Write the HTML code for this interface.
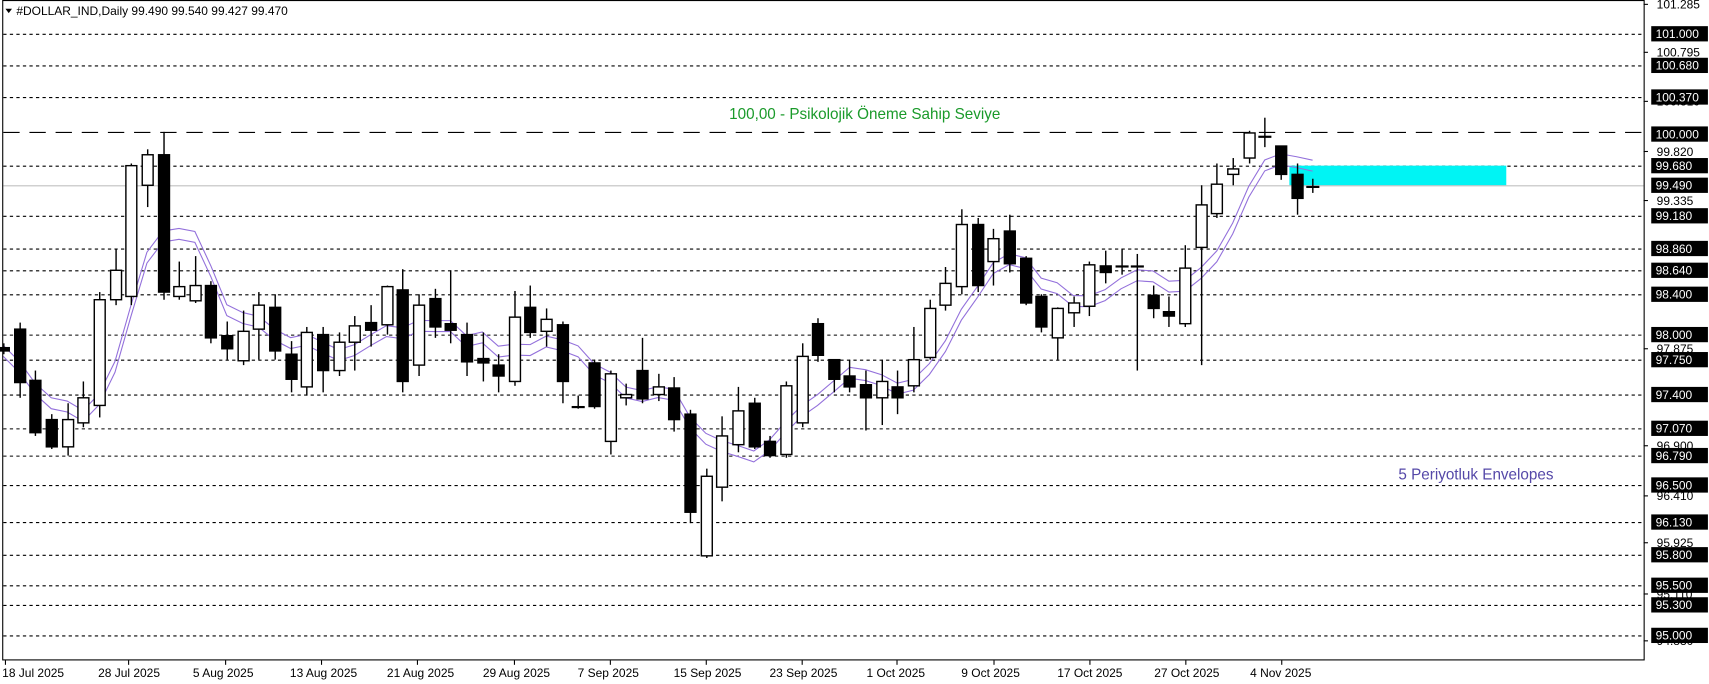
<!DOCTYPE html>
<html><head><meta charset="utf-8"><style>
html,body{margin:0;padding:0;background:#fff;width:1709px;height:684px;overflow:hidden}
svg{display:block}
text{font-family:"Liberation Sans","DejaVu Sans",sans-serif;font-size:11px}
</style></head><body>
<svg id="s" width="1709" height="684" viewBox="0 0 1568 627.6" preserveAspectRatio="none" xmlns="http://www.w3.org/2000/svg">
<rect x="0" y="0" width="1568" height="628" fill="#fff"/>
<g id="grid"></g>
<rect x="1183" y="152" width="199" height="18" fill="#00f4f4"/>
<line x1="3" y1="170.5" x2="1508" y2="170.5" stroke="#c0c0c0" stroke-width="1"/>
<line x1="3" y1="121.5" x2="1508" y2="121.5" stroke="#000" stroke-width="1" stroke-dasharray="15,9"/>
<g id="env"></g>
<g id="cand"></g>
<rect x="2.5" y="0.5" width="1506" height="605" fill="none" stroke="#000"/>
<text x="669" y="109" fill="#1a9a2a" style="font-size:14px">100,00 -  Psikolojik Öneme Sahip Seviye</text>
<text x="1283" y="440" fill="#5548a8" style="font-size:14px">5 Periyotluk Envelopes</text>
<path d="M5 8 L11 8 L8 12 Z" fill="#000"/>
<text x="15" y="14">#DOLLAR_IND,Daily  99.490 99.540 99.427 99.470</text>
<g id="dates" style="font-size:11px">
<text x="2" y="621">18 Jul 2025</text>
<text x="90" y="621">28 Jul 2025</text>
<text x="177" y="621">5 Aug 2025</text>
<text x="266" y="621">13 Aug 2025</text>
<text x="355" y="621">21 Aug 2025</text>
<text x="443" y="621">29 Aug 2025</text>
<text x="530" y="621">7 Sep 2025</text>
<text x="618" y="621">15 Sep 2025</text>
<text x="706" y="621">23 Sep 2025</text>
<text x="795" y="621">1 Oct 2025</text>
<text x="882" y="621">9 Oct 2025</text>
<text x="970" y="621">17 Oct 2025</text>
<text x="1059" y="621">27 Oct 2025</text>
<text x="1147" y="621">4 Nov 2025</text>
</g>
<g id="ax" style="font-size:11px">
<text x="1520" y="8" >101.285</text>
<text x="1520" y="52">100.795</text>
<text x="1520" y="97">100.310</text>
<text x="1520" y="143">99.820</text>
<text x="1520" y="188">99.335</text>
<text x="1520" y="324">97.875</text>
<text x="1520" y="413">96.900</text>
<text x="1520" y="459">96.410</text>
<text x="1520" y="502">95.925</text>
<text x="1520" y="549">95.110</text>
<text x="1520" y="592">94.830</text>
</g>
<g id="lab"></g>
</svg>
<script>
var NS="http://www.w3.org/2000/svg";
function el(p,t,a,txt){var e=document.createElementNS(NS,t);for(var k in a)e.setAttribute(k,a[k]);if(txt)e.textContent=txt;document.getElementById(p).appendChild(e);return e;}
function Y(p){return 31+(101-p)*92;}
var lv=["101.000","100.680","100.370","99.680","99.180","98.860","98.640","98.400","98.000","97.750","97.400","97.070","96.790","96.500","96.130","95.800","95.500","95.300","95.000"];
lv.forEach(function(v){var y=Math.round(Y(+v))+0.5;el("grid","line",{x1:3,y1:y,x2:1508,y2:y,stroke:"#000","stroke-dasharray":"3,3"});});
var boxes=lv.concat(["100.000","99.490"]);
boxes.forEach(function(v){var y=Math.round(Y(+v));el("lab","rect",{x:1515,y:y-7,width:52,height:14,fill:"#000"});el("lab","text",{x:1519,y:y+4,fill:"#fff"},v);});
[8,52,97,143,188,324,413,459,502,549,592].forEach(function(y){el("lab","line",{x1:1508,y1:y-4,x2:1512,y2:y-4,stroke:"#000"});});
[5,118,207,295,383,472,560,648,736,823,912,1000,1088,1176].forEach(function(x){el("lab","line",{x1:x,y1:606,x2:x,y2:610,stroke:"#000"});});
var C=[
[315,325,319,322],[296,365,302,351],[340,400,349,397],[380,412,385,410],[370,418,410,385],[350,392,388,365],
[268,383,372,275],[228,280,275,248],[150,280,272,152],[137,190,170,142],[121,275,142,268],[240,275,272,263],
[235,278,276,262],[258,315,262,310],[295,330,308,320],[285,335,331,304],[268,330,302,280],[270,330,282,322],
[313,360,325,348],[300,363,355,305],[300,360,307,340],[305,345,340,314],[290,340,314,299],[280,318,296,303],
[262,307,298,263],[247,360,266,350],[270,345,335,280],[265,310,274,300],[248,315,297,303],[296,345,307,332],
[305,350,329,333],[325,360,335,345],[267,354,350,291],[262,310,282,305],[283,318,304,293],[295,370,298,350],
[363,375,373,373],[330,375,333,373],[340,417,405,343],[352,372,365,362],[310,370,340,366],[343,368,362,355],
[346,396,356,385],[376,480,380,470],[430,512,510,437],[382,460,447,400],[355,415,408,377],[365,412,370,410],
[400,420,405,418],[350,420,417,354],[315,392,388,327],[292,332,297,326],[330,360,330,348],[330,360,345,355],
[340,395,353,365],[330,390,365,350],[340,380,355,365],[300,360,354,330],[275,330,328,283],[245,285,280,260],
[192,270,263,206],[200,268,206,262],[210,262,240,219],[197,250,212,242],[235,280,237,278],[270,305,272,300],
[282,330,310,283],[272,300,287,278],[240,290,281,243],[230,260,244,250],[228,252,244,246],[233,340,244,246],
[262,292,271,283],[272,300,286,290],[225,300,297,246],[170,335,227,188],[150,200,196,169],[145,170,160,155],
[120,150,145,122],[108,135,127,125],[134,165,134,160],[150,197,160,182],[164,177,171,171]];
var closes=[];
C.forEach(function(c,i){var x=Math.round(3+i*14.65)+0.5;var hi=c[0],lo=c[1],o=c[2],cl=c[3];closes.push(cl);
 el("cand","line",{x1:x,y1:hi,x2:x,y2:lo,stroke:"#000","stroke-width":1.3});
 var top=Math.min(o,cl),h=Math.max(Math.abs(o-cl),1);var bear=cl>o;
 if(h<=2){el("cand","line",{x1:x-6,y1:top+0.5,x2:x+6,y2:top+0.5,stroke:"#000","stroke-width":2});}
 else el("cand","rect",{x:x-5,y:top,width:10,height:h,fill:bear?"#000":"#fff",stroke:"#000","stroke-width":1.3});
});
var up="",dn="";
for(var i=0;i<C.length;i++){var s=0,n=0;for(var j=Math.max(0,i-4);j<=i;j++){s+=closes[j];n++;}var m=s/n;var x=3+i*14.65;
 up+=(i?"L":"M")+x.toFixed(1)+" "+(m-5).toFixed(1);dn+=(i?"L":"M")+x.toFixed(1)+" "+(m+5).toFixed(1);}
el("env","path",{d:up,fill:"none",stroke:"#9370db","stroke-width":1});
el("env","path",{d:dn,fill:"none",stroke:"#9370db","stroke-width":1});
</script>
</body></html>
